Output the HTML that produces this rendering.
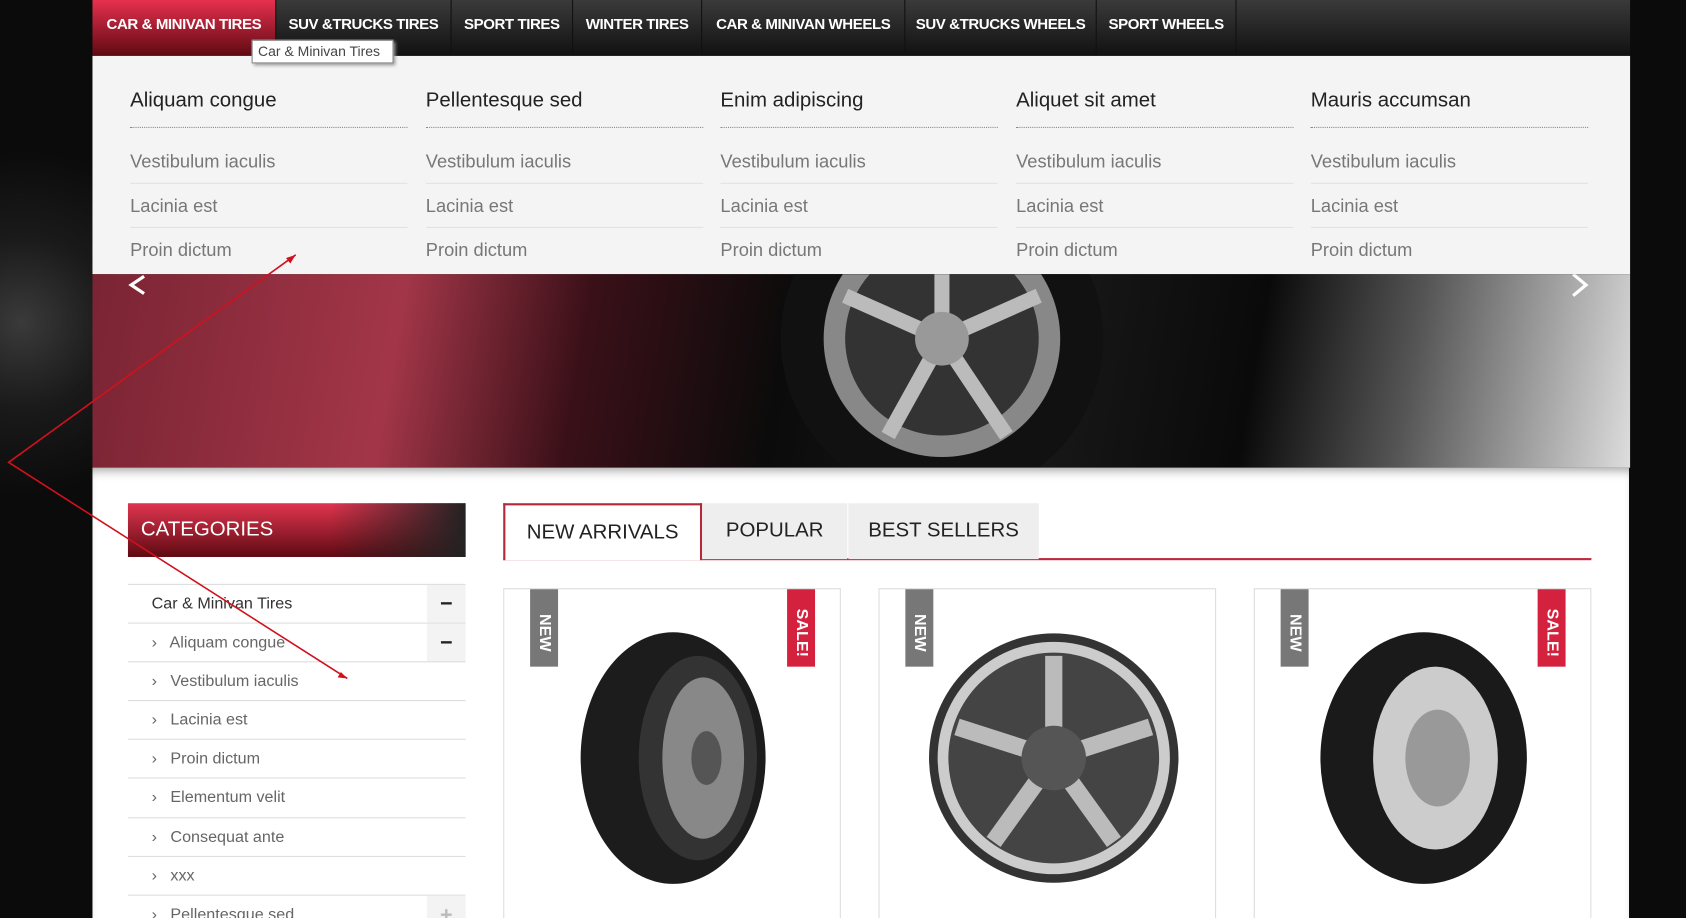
<!DOCTYPE html>
<html><head><meta charset="utf-8"><style>
*{margin:0;padding:0;box-sizing:border-box}
html,body{width:1686px;height:918px;overflow:hidden;background:#0d0d0d}
#w{position:absolute;left:0;top:0;width:1568px;height:854px;overflow:hidden;transform:scale(1.07526);transform-origin:0 0;font-family:"Liberation Sans",sans-serif;
background:radial-gradient(circle at 20px 300px,#3a3a3a 0,#1a1a1a 80px,#0b0b0b 160px),#0b0b0b}
.abs{position:absolute}
#nav{left:86px;top:0;width:1430px;height:52px;background:linear-gradient(#3a3a3a,#111)}
.ni{position:absolute;top:0;height:52px;line-height:45px;color:#fff;font-size:14px;font-weight:bold;text-align:center;border-right:1px solid #111;letter-spacing:-0.4px}
#mega{left:86px;top:52px;width:1430px;height:203px;background:#f4f4f4}
.col{position:absolute;top:0;width:258px}
.col h3{font-weight:normal;font-size:19px;color:#222;margin-top:31px;height:36px;border-bottom:1px dotted #888}
.col div{font-size:17px;color:#777;height:41px;line-height:42px;border-bottom:1px solid #e2e2e2}
.col div.f{margin-top:11px}
.col div:last-child{border:none}
#ban{left:86px;top:255px;width:1430px;height:180px;background:linear-gradient(100deg,#7a2433 0,#a23648 20%,#3a1018 32%,#0b0b0b 45%,#1a1a1a 60%,#0a0a0a 75%,#555 85%,#ddd 100%)}
#main{left:86px;top:435px;width:1429px;height:440px;background:#fff;box-shadow:inset 0 8px 10px -6px #999}
#cat{left:119px;top:468px;width:314px;height:50px;background:linear-gradient(90deg,rgba(0,0,0,0) 60%,#222 100%),linear-gradient(#e0354f,#5e0a12);color:#fff;font-size:19px;line-height:50px;padding-left:12px}
.row{position:absolute;left:119px;width:314px;height:36px;border-top:1px solid #ddd;font-size:15px;color:#666;line-height:36px}
.pm{position:absolute;right:0;top:0;width:36px;height:35px;background:#f3f3f3;text-align:center;font-weight:bold;color:#222;font-size:20px}
.tab{position:absolute;top:468px;height:52px;line-height:52px;font-size:19px;color:#222;text-align:center;background:#eee}
.card{position:absolute;top:547px;width:314px;height:340px;border:1px solid #ddd;background:#fff}
.bd{position:absolute;top:0;width:26px;height:72px;color:#fff;font-weight:bold;font-size:15px;writing-mode:vertical-rl;text-align:center;line-height:26px;padding-top:8px}
</style></head><body><div id="w">
<div id="nav" class="abs">
<div class="ni" style="left:0;width:171px;background:linear-gradient(#e6304e,#5e0a12)">CAR &amp; MINIVAN TIRES</div>
<div class="ni" style="left:171px;width:163px">SUV &amp;TRUCKS TIRES</div>
<div class="ni" style="left:334px;width:113px">SPORT TIRES</div>
<div class="ni" style="left:447px;width:120px">WINTER TIRES</div>
<div class="ni" style="left:567px;width:189px">CAR &amp; MINIVAN WHEELS</div>
<div class="ni" style="left:756px;width:178px">SUV &amp;TRUCKS WHEELS</div>
<div class="ni" style="left:934px;width:130px">SPORT WHEELS</div>
</div>
<div id="mega" class="abs">
<div class="col" style="left:35px"><h3>Aliquam congue</h3><div class="f">Vestibulum iaculis</div><div>Lacinia est</div><div>Proin dictum</div></div>
<div class="col" style="left:310px"><h3>Pellentesque sed</h3><div class="f">Vestibulum iaculis</div><div>Lacinia est</div><div>Proin dictum</div></div>
<div class="col" style="left:584px"><h3>Enim adipiscing</h3><div class="f">Vestibulum iaculis</div><div>Lacinia est</div><div>Proin dictum</div></div>
<div class="col" style="left:859px"><h3>Aliquet sit amet</h3><div class="f">Vestibulum iaculis</div><div>Lacinia est</div><div>Proin dictum</div></div>
<div class="col" style="left:1133px"><h3>Mauris accumsan</h3><div class="f">Vestibulum iaculis</div><div>Lacinia est</div><div>Proin dictum</div></div>
</div>
<div class="abs" style="left:234px;top:37px;width:132px;height:22px;background:#fff;border:1px solid #888;box-shadow:2px 2px 3px #999;font-size:13px;color:#444;line-height:20px;padding-left:5px">Car &amp; Minivan Tires</div>
<div id="ban" class="abs">
<svg width="1430" height="180" style="position:absolute;left:0;top:0">
<circle cx="790" cy="60" r="150" fill="#111"/><circle cx="790" cy="60" r="110" fill="#888"/><circle cx="790" cy="60" r="90" fill="#333"/>
<g stroke="#bbb" stroke-width="14"><line x1="790" y1="60" x2="700" y2="20"/><line x1="790" y1="60" x2="880" y2="20"/><line x1="790" y1="60" x2="740" y2="150"/><line x1="790" y1="60" x2="850" y2="150"/><line x1="790" y1="60" x2="790" y2="-30"/></g>
<circle cx="790" cy="60" r="25" fill="#999"/>
<path d="M48 2 L36 10 L48 18" stroke="#fff" stroke-width="3" fill="none"/><path d="M1377 0 L1389 10 L1377 20" stroke="#fff" stroke-width="3" fill="none"/>
</svg></div>
<div id="main" class="abs"></div>
<div id="cat" class="abs">CATEGORIES</div>
<div class="row" style="top:543px;padding-left:22px;color:#333">Car &amp; Minivan Tires<div class="pm">−</div></div>
<div class="row" style="top:579px;padding-left:22px">›&nbsp;&nbsp; Aliquam congue<div class="pm">−</div></div>
<div class="row" style="top:615px;padding-left:22px">›&nbsp;&nbsp; Vestibulum iaculis</div>
<div class="row" style="top:651px;padding-left:22px">›&nbsp;&nbsp; Lacinia est</div>
<div class="row" style="top:687px;padding-left:22px">›&nbsp;&nbsp; Proin dictum</div>
<div class="row" style="top:723px;padding-left:22px">›&nbsp;&nbsp; Elementum velit</div>
<div class="row" style="top:760px;padding-left:22px">›&nbsp;&nbsp; Consequat ante</div>
<div class="row" style="top:796px;padding-left:22px">›&nbsp;&nbsp; xxx</div>
<div class="row" style="top:832px;padding-left:22px">›&nbsp;&nbsp; Pellentesque sed<div class="pm" style="color:#bbb">+</div></div>
<div class="abs" style="left:468px;top:519px;width:1012px;height:2px;background:#c0283c"></div>
<div class="tab" style="left:468px;width:185px;background:#fff;border:2px solid #b3283a;border-bottom:none;height:53px">NEW ARRIVALS</div>
<div class="tab" style="left:653px;width:135px">POPULAR</div>
<div class="tab" style="left:789px;width:177px">BEST SELLERS</div>
<div class="card" style="left:468px"><div class="bd" style="left:24px;background:#777">NEW</div><div class="bd" style="left:263px;background:#d4213d">SALE!</div>
<svg width="314" height="300"><ellipse cx="157" cy="157" rx="86" ry="117" fill="#1c1c1c"/><ellipse cx="180" cy="157" rx="55" ry="95" fill="#333"/><ellipse cx="185" cy="157" rx="38" ry="75" fill="#888"/><ellipse cx="188" cy="157" rx="14" ry="25" fill="#555"/></svg></div>
<div class="card" style="left:817px"><div class="bd" style="left:24px;background:#777">NEW</div>
<svg width="314" height="300"><circle cx="162" cy="157" r="116" fill="#333"/><circle cx="162" cy="157" r="108" fill="#ccc"/><circle cx="162" cy="157" r="98" fill="#444"/><g stroke="#bbb" stroke-width="16"><line x1="162" y1="157" x2="162" y2="62"/><line x1="162" y1="157" x2="252" y2="128"/><line x1="162" y1="157" x2="218" y2="235"/><line x1="162" y1="157" x2="106" y2="235"/><line x1="162" y1="157" x2="72" y2="128"/></g><circle cx="162" cy="157" r="30" fill="#555"/></svg></div>
<div class="card" style="left:1166px"><div class="bd" style="left:24px;background:#777">NEW</div><div class="bd" style="left:263px;background:#d4213d">SALE!</div>
<svg width="314" height="300"><ellipse cx="157" cy="157" rx="96" ry="117" fill="#1a1a1a"/><ellipse cx="168" cy="157" rx="58" ry="85" fill="#ccc"/><ellipse cx="170" cy="157" rx="30" ry="45" fill="#999"/></svg></div>
<svg class="abs" style="left:0;top:0" width="1568" height="854"><polyline points="275,237 8,430 323,631" stroke="#d0111e" stroke-width="1.5" fill="none"/><path d="M275 237 l-9 3 l4 5z M323 631 l-9 -1 l3 -5z" fill="#d0111e"/></svg>
</div></body></html>
